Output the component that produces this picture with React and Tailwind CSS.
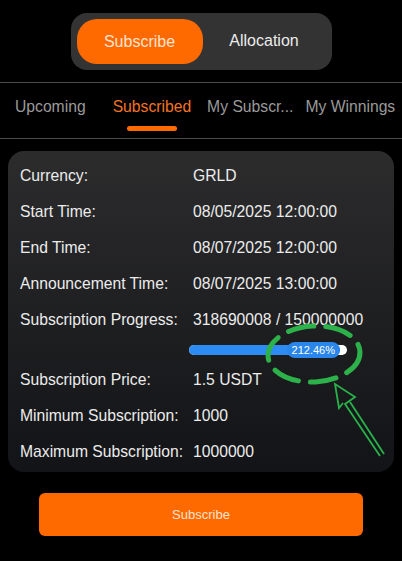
import React from 'react'

const rows = [
  ['Currency:', 'GRLD'],
  ['Start Time:', '08/05/2025 12:00:00'],
  ['End Time:', '08/07/2025 12:00:00'],
  ['Announcement Time:', '08/07/2025 13:00:00'],
  ['Subscription Progress:', '318690008 / 150000000'],
]

const rows2 = [
  ['Subscription Price:', '1.5 USDT'],
  ['Minimum Subscription:', '1000'],
  ['Maximum Subscription:', '1000000'],
]

function Row({ label, value }) {
  return (
    <div className="flex items-center h-[36px]">
      <div className="w-[173px] shrink-0 text-[#ececec] whitespace-nowrap">{label}</div>
      <div className="text-[#ececec] whitespace-nowrap">{value}</div>
    </div>
  )
}

export default function App() {
  const tabs = ['Upcoming', 'Subscribed', 'My Subscr...', 'My Winnings']
  return (
    <div className="relative w-[402px] h-[561px] bg-black overflow-hidden font-['Liberation_Sans',Arial,sans-serif] text-[15.7px]">
      <div className="flex justify-center pt-[13px]">
        <div className="flex items-center w-[261px] h-[57px] rounded-[16px] bg-[#333333] px-[6px]">
          <div className="w-[126px] h-[45px] rounded-[20px] bg-[#ff6a00] flex items-center justify-center text-[16px] text-[#fde3cf]">Subscribe</div>
          <div className="flex-1 flex items-center justify-center text-[16px] text-[#ececec] -mt-[1px]">Allocation</div>
        </div>
      </div>

      <div className="mt-[12px] border-t border-b border-[#4a4a4a] h-[57px] flex items-start">
        <div className="flex w-full pt-[12px]">
          <div className="ml-[15px] text-[#9a9a9a]">{tabs[0]}</div>
          <div className="ml-[27px] relative flex flex-col items-center">
            <span className="text-[#f47320]">{tabs[1]}</span>
            <span className="mt-[7px] w-[50px] h-[5px] rounded-full bg-[#ff6a00]"></span>
          </div>
          <div className="ml-[16px] text-[#9a9a9a] whitespace-nowrap">{tabs[2]}</div>
          <div className="ml-[12px] text-[#9a9a9a] whitespace-nowrap">{tabs[3]}</div>
        </div>
      </div>

      <div className="mx-[8px] mt-[12px] rounded-[16px] bg-gradient-to-b from-[#2c2c2d] to-[#131417] px-[12px] pt-[7px] pb-[2px]">
        {rows.map(([l, v]) => <Row key={l} label={l} value={v} />)}
        <div className="flex h-[24px] items-center">
          <div className="w-[169px] shrink-0"></div>
          <div className="relative w-[158px] h-[10px] rounded-full bg-white">
            <div className="absolute left-0 top-0 h-[10px] w-[151px] rounded-full bg-[#2c8cf4]"></div>
            <div className="absolute right-[7px] top-[-3px] h-[16px] px-[5px] rounded-full bg-[#2a86ea] text-white text-[11px] leading-[16px]">212.46%</div>
          </div>
        </div>
        {rows2.map(([l, v]) => <Row key={l} label={l} value={v} />)}
      </div>

      <div className="flex justify-center mt-[21px]">
        <div className="w-[324px] h-[43px] rounded-[6px] bg-[#ff6a00] flex items-center justify-center text-[13px] text-[#fde3cf]">Subscribe</div>
      </div>

      <svg className="absolute left-0 top-0 pointer-events-none" width="402" height="561">
        <ellipse cx="314" cy="354" rx="46" ry="28" fill="none" stroke="#2db24b" strokeWidth="5" strokeLinecap="round" strokeDasharray="26 12" transform="rotate(-3 314 354)" />
        <g fill="none" stroke="#27b24a" strokeWidth="1.8" strokeLinejoin="miter">
          <path d="M380 456 L345 404 L355 397 L335 384 L339 408 L343 403" />
          <path d="M384 454 L350 402" />
        </g>
      </svg>
    </div>
  )
}
